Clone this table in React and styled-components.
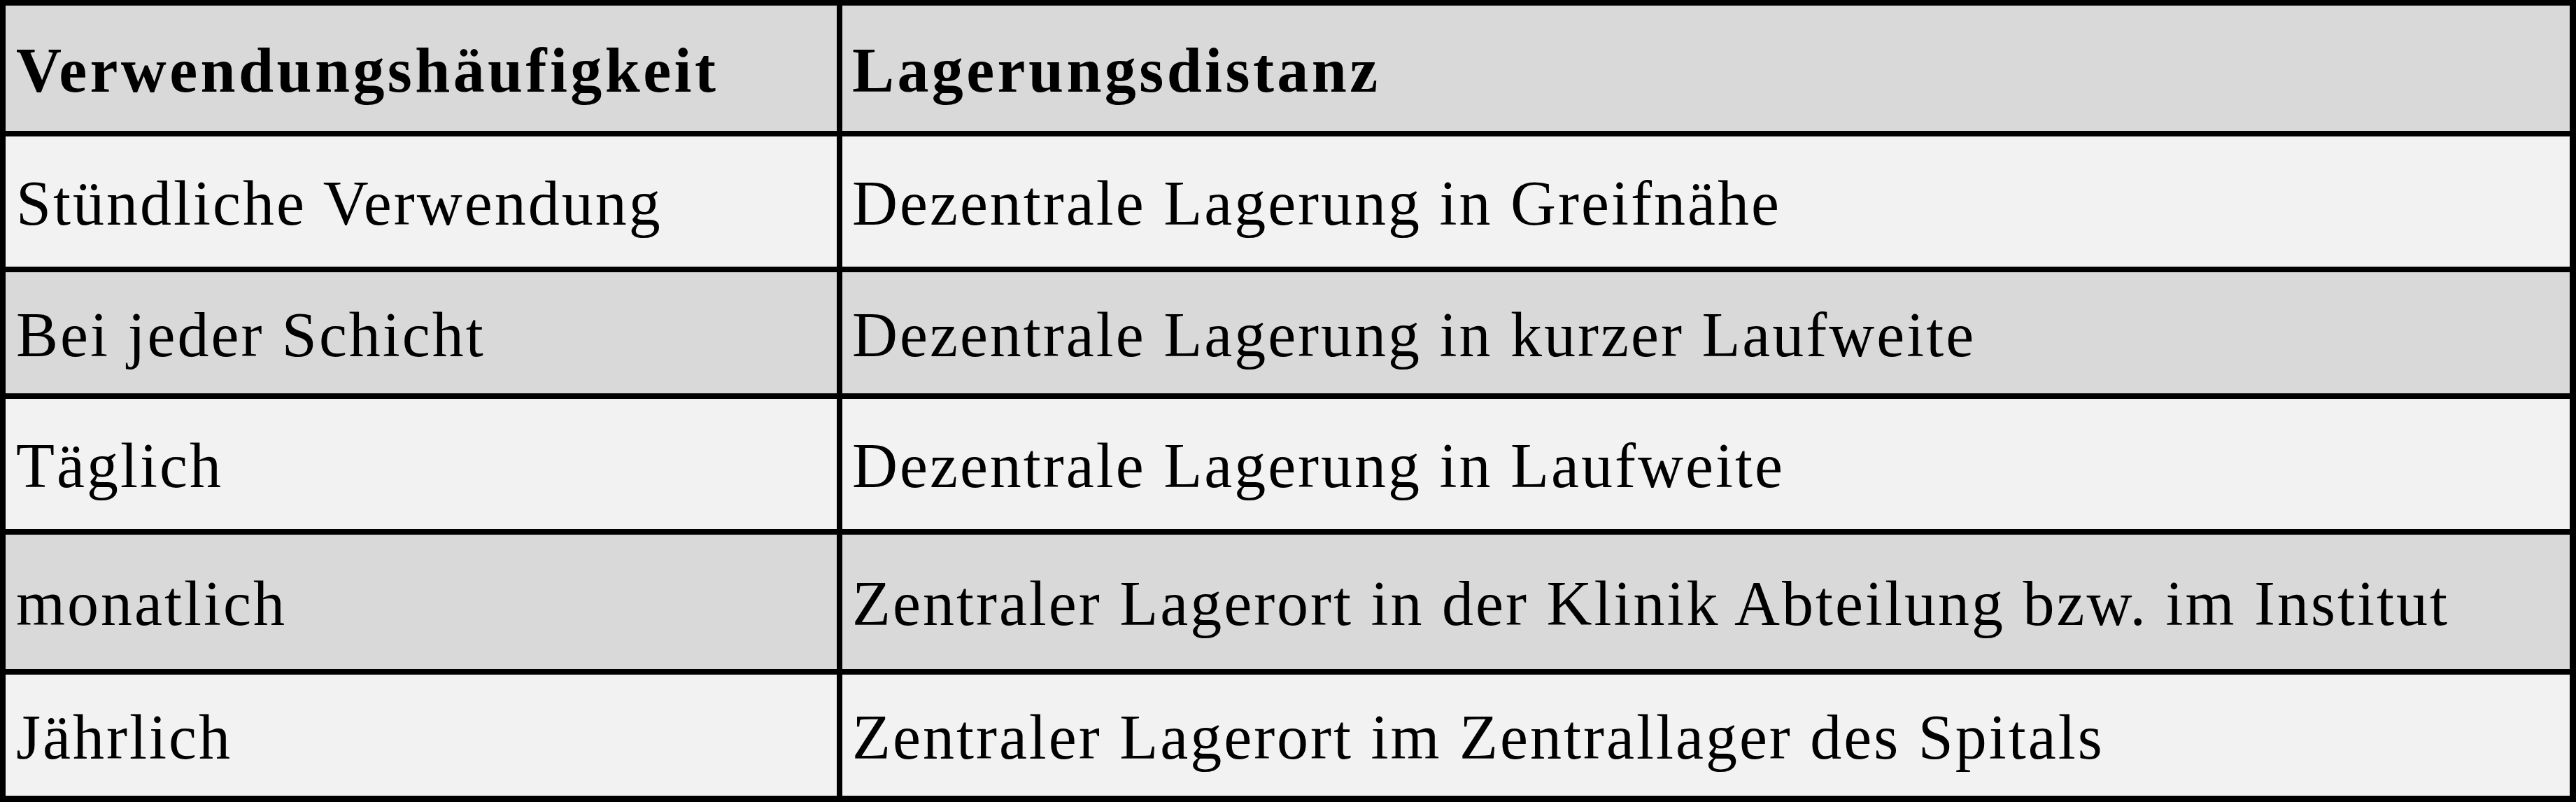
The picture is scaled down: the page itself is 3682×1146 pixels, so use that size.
import styled, { createGlobalStyle } from 'styled-components';

const GlobalStyle = createGlobalStyle`
  html, body {
    margin: 0;
    padding: 0;
    background: #ffffff;
  }
`;

const rows = [
  { freq: 'Verwendungshäufigkeit', place: 'Lagerungsdistanz', height: 179, head: true },
  { freq: 'Stündliche Verwendung', place: 'Dezentrale Lagerung in Greifnähe', height: 186 },
  { freq: 'Bei jeder Schicht', place: 'Dezentrale Lagerung in kurzer Laufweite', height: 173 },
  { freq: 'Täglich', place: 'Dezentrale Lagerung in Laufweite', height: 186 },
  { freq: 'monatlich', place: 'Zentraler Lagerort in der Klinik Abteilung bzw. im Institut', height: 192 },
  { freq: 'Jährlich', place: 'Zentraler Lagerort im Zentrallager des Spitals', height: 173 },
];

const Table = styled.div`
  display: grid;
  grid-template-columns: 1188px 2469px;
  grid-template-rows: ${({ $rows }) => $rows.map((r) => `${r.height}px`).join(' ')};
  gap: 8px;
  padding: 8px 9px 9px 8px;
  width: 3682px;
  height: 1146px;
  box-sizing: border-box;
  background: #000000;
`;

const Cell = styled.div`
  display: flex;
  align-items: center;
  padding: 5px 0 0 ${({ $col }) => ($col === 0 ? '15px' : '14px')};
  box-sizing: border-box;
  background: ${({ $shade }) => ($shade ? '#d9d9d9' : '#f2f2f2')};
  color: #000000;
  font-family: 'Liberation Serif', 'Times New Roman', serif;
  font-size: 90px;
  font-weight: ${({ $head }) => ($head ? 700 : 400)};
  letter-spacing: ${({ $head }) => ($head ? '4.4px' : '3px')};
  white-space: nowrap;
`;

export default function App() {
  return (
    <>
      <GlobalStyle />
      <Table $rows={rows}>
        {rows.map((row, i) => {
          const shade = i % 2 === 0;
          return [
            <Cell key={`f${i}`} $col={0} $shade={shade} $head={row.head}>
              {row.freq}
            </Cell>,
            <Cell key={`p${i}`} $col={1} $shade={shade} $head={row.head}>
              {row.place}
            </Cell>,
          ];
        })}
      </Table>
    </>
  );
}
